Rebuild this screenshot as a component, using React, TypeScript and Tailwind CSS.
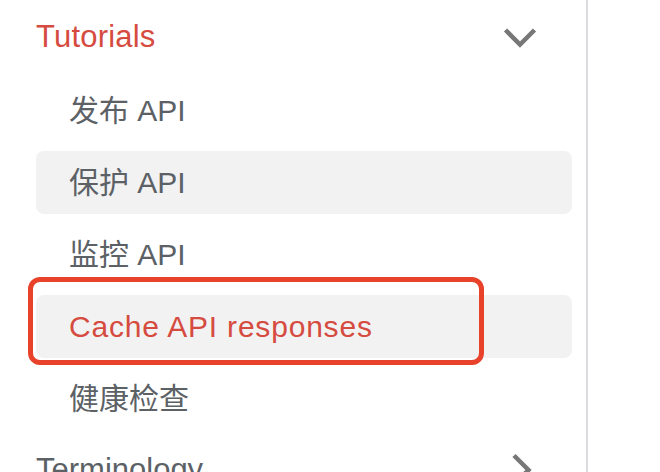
const items = [
  { label: "发布 API", bg: false, active: false },
  { label: "保护 API", bg: true, active: false },
  { label: "监控 API", bg: false, active: false },
  { label: "Cache API responses", bg: true, active: true },
  { label: "健康检查", bg: false, active: false },
];

const ChevronDown = () => (
  <svg width="34" height="21" viewBox="0 0 34 21" fill="none">
    <polyline points="2.5,3 17,17.5 31.5,3" stroke="#777777" strokeWidth="4.5" />
  </svg>
);

const ChevronRight = () => (
  <svg width="21" height="34" viewBox="0 0 21 34" fill="none">
    <polyline points="3,2.5 17.5,17 3,31.5" stroke="#777777" strokeWidth="4.5" />
  </svg>
);

export default function App() {
  return (
    <div className="w-[660px] h-[472px] overflow-hidden bg-white flex font-['Liberation_Sans','Noto_Sans_CJK_SC',sans-serif]">
      <aside className="relative w-[588px] shrink-0 border-r-2 border-[#dcdce0] pl-9 pr-[14px] pt-[5px]">
        {/* section header */}
        <div className="h-16 flex items-center justify-between pr-[35px]">
          <span className="text-[31px] tracking-[0.2px] text-[#d64b40]">Tutorials</span>
          <ChevronDown />
        </div>

        <ul className="mt-[10px] flex flex-col gap-[9px]">
          {items.map((it) => (
            <li
              key={it.label}
              className={`h-[63px] rounded-lg pl-[33px] flex items-center text-[30px] ${
                it.bg ? "bg-[#f2f2f2]" : ""
              } ${it.active ? "text-[#d64b40] tracking-[0.8px]" : "text-[#5c6166]"}`}
            >
              {it.label}
            </li>
          ))}
        </ul>

        <div className="mt-2 h-16 flex items-center justify-between pr-[40px]">
          <span className="text-[31px] text-[#5c6166]">Terminology</span>
          <ChevronRight />
        </div>

        {/* annotation box */}
        <div className="absolute left-[28px] top-[277px] w-[456px] h-[88px] rounded-xl border-[5px] border-[#e8432a]" />
      </aside>
      <div className="flex-1" />
    </div>
  );
}
